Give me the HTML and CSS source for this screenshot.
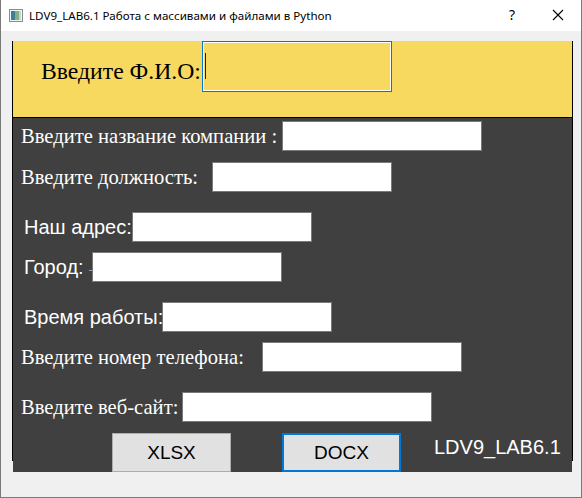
FILE: index.html
```html
<!DOCTYPE html>
<html lang="ru">
<head>
<meta charset="utf-8">
<title>LDV9_LAB6.1</title>
<link rel="stylesheet" href="styles.css">
</head>
<body>
<div class="window">
  <div class="titlebar">
    <svg class="appicon" width="14" height="13" viewBox="0 0 14 13">
      <rect x="0.5" y="0.5" width="13" height="12" fill="#f4f4f4" stroke="#8a8a8a"/>
      <rect x="2" y="2" width="4" height="9" fill="#3f7f8f"/>
      <rect x="6" y="2" width="4" height="9" fill="#7fb08a"/>
      <rect x="10" y="2" width="2" height="9" fill="#c8d8d0"/>
    </svg>
    <span class="title">LDV9_LAB6.1 Работа с массивами и файлами в Python</span>
    <span class="help">?</span>
    <svg class="close" width="12" height="12" viewBox="0 0 12 12"><path d="M1 1L11 11M11 1L1 11" stroke="#000" stroke-width="1.1"/></svg>
  </div>
  <div class="client">
    <div class="frame">
      <div class="head">
        <span class="fio-label">Введите Ф.И.О:</span>
        <div class="fio-input"><span class="caret"></span></div>
      </div>
      <div class="form">
        <div class="row r1"><span class="lbl serif">Введите название компании :</span><span class="field"></span></div>
        <div class="row r2"><span class="lbl serif">Введите должность:</span><span class="field"></span></div>
        <div class="row r3"><span class="lbl sans">Наш адрес:</span><span class="field"></span></div>
        <div class="row r4"><span class="lbl sans">Город:<span class="dash"></span></span><span class="field"></span></div>
        <div class="row r5"><span class="lbl sans">Время работы:</span><span class="field"></span></div>
        <div class="row r6"><span class="lbl serif">Введите номер телефона:</span><span class="field"></span></div>
        <div class="row r7"><span class="lbl serif">Введите веб-сайт:</span><span class="field"></span></div>
        <div class="buttons">
          <div class="btn">XLSX</div>
          <div class="btn focus">DOCX</div>
          <div class="sign">LDV9_LAB6.1</div>
        </div>
      </div>
    </div>
  </div>
</div>
</body>
</html>
```
FILE: styles.css
```css
* { box-sizing: border-box; }
html, body { margin: 0; padding: 0; }
body { width: 582px; height: 498px; overflow: hidden; background: #fff; }
.window {
  width: 582px; height: 498px;
  border: 1px solid #7a7a7a; border-top: none;
  display: flex; flex-direction: column;
  background: #f0f0f0;
}
.titlebar {
  height: 31px; flex: none; background: #fff;
  display: flex; align-items: center;
  font-family: "Noto Sans", "Liberation Sans", sans-serif; font-size: 11.6px; color: #000;
}
.appicon { margin-left: 8px; margin-top: -1px; }
.title { margin-left: 6px; margin-top: -1px; }
.help { margin-left: auto; font-size: 14px; margin-right: 37px; margin-top: -2px; }
.close { margin-right: 17px; margin-top: -1px; }
.client { flex: 1; padding: 10px 9px 0 11px; }
.frame {
  width: 561px; height: 420px;
  border-left: 1px solid #000; border-right: 1px solid #000;
  display: flex; flex-direction: column;
}
.head {
  height: 77px; flex: none; background: #f8d960;
  border-bottom: 1px solid #000;
  display: flex; align-items: flex-start;
  padding-left: 28px;
}
.fio-label {
  width: 161px; flex: none; white-space: nowrap;
  font-family: "Liberation Serif", serif; font-size: 23.7px; color: #000;
  margin-top: 16px; line-height: 28px;
}
.fio-input {
  width: 190px; height: 51px; flex: none;
  border: 1px solid #0078d7; box-shadow: inset 0 0 0 1px #fff;
  position: relative;
}
.caret { position: absolute; left: 2px; top: 11px; width: 1px; height: 26px; background: #0000ff; }
.form {
  flex: 1; background: #404040;
  display: flex; flex-direction: column;
  padding: 3px 0 0 8px;
}
.row { display: flex; align-items: center; height: 30px; flex: none; }
.lbl { color: #fff; white-space: nowrap; flex: none; position: relative; }
.serif { font-family: "Liberation Serif", serif; font-size: 20.6px; }
.sans { font-family: "Liberation Sans", Arial, sans-serif; font-size: 20px; margin-left: 3px; }
.field { height: 30px; flex: none; background: #fff; border: 1px solid #7a7a7a; }
.r1 .lbl { width: 261px; } .r1 .field { width: 200px; }
.r2 { margin-top: 11px; } .r2 .lbl { width: 191px; } .r2 .field { width: 180px; }
.r3 { margin-top: 20px; } .r3 .lbl { width: 108px; } .r3 .field { width: 180px; }
.r4 { margin-top: 10px; } .r4 .lbl { width: 68px; } .r4 .field { width: 190px; }
.r5 { margin-top: 20px; } .r5 .lbl { width: 138px; } .r5 .field { width: 170px; }
.r6 { margin-top: 10px; } .r6 .lbl { width: 241px; } .r6 .field { width: 200px; }
.r7 { margin-top: 20px; } .r7 .lbl { width: 161px; } .r7 .field { width: 250px; }
.dash { position: absolute; right: 0; top: 14px; width: 3px; height: 1px; background: #7fa7d7; }
.buttons { display: flex; align-items: flex-start; margin-top: 11px; padding-left: 91px; }
.btn {
  width: 119px; height: 39px; flex: none;
  background: #e1e1e1; border: 1px solid #adadad;
  display: flex; align-items: center; justify-content: center;
  font-family: "Liberation Sans", Arial, sans-serif; font-size: 19px; color: #000;
  padding-top: 1px;
}
.btn.focus { margin-left: 51px; border: 2px solid #0078d7; }
.sign {
  margin-left: 33px; margin-top: 3px;
  font-family: "Liberation Sans", Arial, sans-serif; font-size: 20px; color: #fff;
}
```
